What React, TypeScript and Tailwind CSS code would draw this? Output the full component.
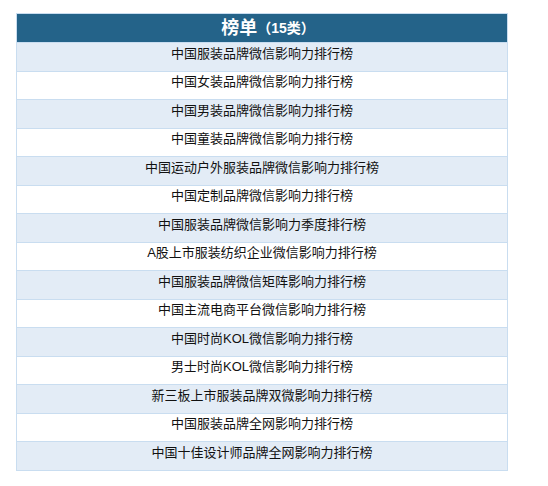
import React from "react";

const rows = [
  "中国服装品牌微信影响力排行榜",
  "中国女装品牌微信影响力排行榜",
  "中国男装品牌微信影响力排行榜",
  "中国童装品牌微信影响力排行榜",
  "中国运动户外服装品牌微信影响力排行榜",
  "中国定制品牌微信影响力排行榜",
  "中国服装品牌微信影响力季度排行榜",
  "A股上市服装纺织企业微信影响力排行榜",
  "中国服装品牌微信矩阵影响力排行榜",
  "中国主流电商平台微信影响力排行榜",
  "中国时尚KOL微信影响力排行榜",
  "男士时尚KOL微信影响力排行榜",
  "新三板上市服装品牌双微影响力排行榜",
  "中国服装品牌全网影响力排行榜",
  "中国十佳设计师品牌全网影响力排行榜",
];

export default function App() {
  return (
    <div
      className="w-[548px] h-[486px] bg-white pt-[13px] pl-[16px]"
      style={{ fontFamily: '"Liberation Sans", "Noto Sans CJK SC", sans-serif' }}
    >
      <div className="w-[492px] border border-[#c9ddf0] flex flex-col">
        <div className="h-[28px] bg-[#246389] flex items-center justify-center text-white font-bold">
          <div className="flex items-center ml-[12px]">
            <span className="text-[18px] leading-none">榜单</span>
            <span className="text-[14px] leading-none">（15类）</span>
          </div>
        </div>
        {rows.map((r, i) => (
          <div
            key={i}
            className={`h-[28.5px] border-t border-[#c9ddf0] flex justify-center pt-[1.5px] text-[13px] leading-[18px] text-[#111] ${
              i % 2 === 0 ? "bg-[#e3ecf6]" : "bg-white"
            }`}
          >
            {r}
          </div>
        ))}
      </div>
    </div>
  );
}
